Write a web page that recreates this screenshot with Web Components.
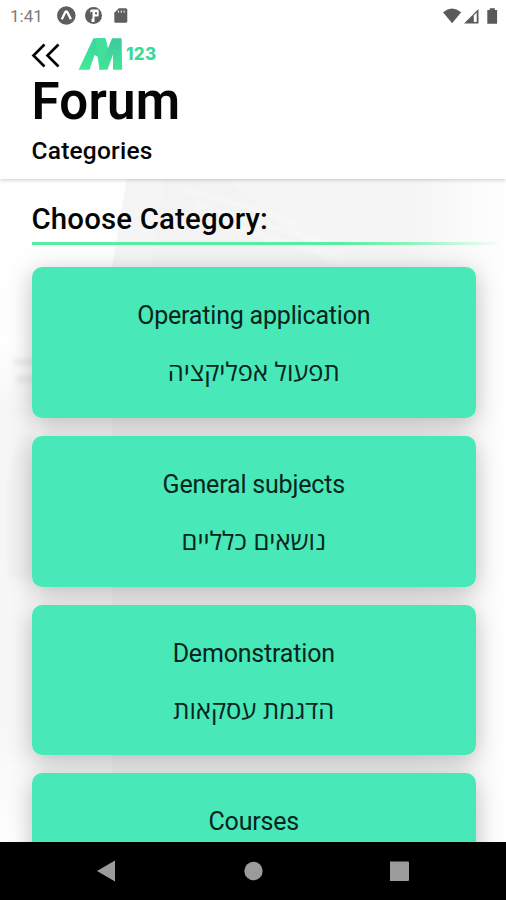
<!DOCTYPE html>
<html lang="en">
<head>
<meta charset="utf-8">
<title>Forum</title>
<style>
html,body{margin:0;height:100%;overflow:hidden;background:#fff}
body{font-family:Roboto,"Open Sans",sans-serif;color:#050505}
</style>
</head>
<body>
<forum-app></forum-app>
<script>
const define=(name,html)=>{
  const t=document.createElement('template');
  t.innerHTML=html;
  customElements.define(name,class extends HTMLElement{
    constructor(){super();this.attachShadow({mode:'open'}).append(t.content.cloneNode(true));}
  });
};

define('status-bar',`<style>
:host{display:flex;height:32px;box-sizing:border-box;padding:0 7px 0 10px;align-items:center;font-size:17px;color:#7c7c7c}
.time{width:47px;line-height:32px}
svg{display:block}
.right{margin-left:auto}
</style>
<span class="time">1:41</span>
<svg width="74" height="22" viewBox="57 5 74 22">
<circle cx="66.3" cy="15.5" r="9.3" fill="#5e5e5e"/>
<path d="M61.8 19.3 65.2 12.3q1.1-1.800 2.200 0l3.500 7" fill="none" stroke="#fff" stroke-width="2.300"/>
<circle cx="93.5" cy="15.5" r="8.500" fill="#5e5e5e"/>
<path d="M91 9.500h6.500q1.200 0 1.200 1.200v4.500q0 1.200-1.200 1.200H94.500v5.500H91.500v-8.500h-1q-1.500-2 .5-3.900z" fill="#fff"/><path d="M90.500 11.800h2v7h-2zM95 12.300h2v2h-2z" fill="#5e5e5e"/>
<path d="M118.800 8.200h6.900q1.600 0 1.600 1.600v11.400q0 1.600-1.600 1.600h-9.800q-1.600 0-1.600-1.600v-8.400z" fill="#5e5e5e"/>
<path d="M118.500 10.500v2.300M121.300 10.500v2.300M124.100 10.500v2.300" stroke="#ddd" stroke-width="1.200"/>
</svg>
<svg class="right" width="58" height="20" viewBox="441 5 58 20">
<path d="M443 11.200q9-7.400 18.200 0L452.100 22.300z" fill="#5a5a5a"/>
<path d="M464 22.500 478.500 8v14.500z" fill="#5a5a5a"/><path d="M473.800 14.500 476.700 11.500v9.600h-2.900z" fill="#fff"/>
<path d="M489.700 7.300h5.200v1.700h2.200v13.800h-9.800V9h2.400z" fill="#5a5a5a"/>
</svg>`);

define('brand-logo',`<style>
:host{display:flex;align-items:flex-start;color:#3bd99a}
svg{display:block}
span{font:800 17px/20px Inter,sans-serif;margin:7px 0 0 3px;letter-spacing:.3px}
</style>
<svg width="45" height="34" viewBox="78 37 45 34">
<defs><linearGradient id="g" x1="0" y1="1" x2="1" y2="0"><stop offset="0" stop-color="#43ed96"/><stop offset="1" stop-color="#37cfa0"/></linearGradient>
<linearGradient id="h" x1="0" y1="0" x2="0" y2="1"><stop offset="0" stop-color="#3cc99e"/><stop offset="1" stop-color="#42e696"/></linearGradient></defs>
<path d="M78.600 69.800 93.400 38.200H105l2 8L100 58l-5.500-3L89.500 69.800z" fill="url(#g)"/>
<path d="M95 38.200h10.500l3.500 14-7.500 17.600H99.500z" fill="#40df9c"/>
<path d="M99.500 69.800 112 38.200H121.600L122.100 69.800H113V54.500L107.500 69.800z" fill="url(#h)"/>
</svg><span>123</span>`);

define('page-header',`<style>
:host{display:block;position:relative;z-index:2;box-sizing:border-box;height:179px;background:#fff;box-shadow:0 1px 4px #0003}
.bar{display:flex;height:41px;padding:5px 0 0 31px;box-sizing:border-box}
.back{width:29px;height:26px;margin:5px 18px 0 0}
h1{margin:0;padding-left:31.500px;font-size:51px;line-height:58px;font-weight:600;letter-spacing:.25px;height:60px}
h2{margin:0;padding-left:31.500px;font-size:24.500px;line-height:30px;font-weight:500;padding-top:3px;letter-spacing:.22px}
</style>
<status-bar></status-bar>
<div class="bar">
<svg class="back" viewBox="31 42 29 26"><path d="M44.500 44.500 33.500 55.500 44.500 66.500M58.500 44.500 47.500 55.500 58.500 66.500" fill="none" stroke="#050505" stroke-width="2.700"/></svg>
<brand-logo></brand-logo></div>
<h1><slot name="title"></slot></h1>
<h2><slot name="subtitle"></slot></h2>`);

define('section-title',`<style>
:host{display:block;height:66px;box-sizing:border-box;padding:22px 0 0 31.500px;font-size:29.400px;line-height:36px;font-weight:500;letter-spacing:.17px;margin-bottom:22px}
i{display:block;height:3px;margin-top:5px;background:linear-gradient(90deg,#56eda4 65%,#8df4bd 80%,#fff0 99%)}
</style><slot></slot><i></i>`);

define('category-card',`<style>
:host{display:block;position:relative;box-sizing:border-box;height:150.800px;flex:none;border-radius:10px;background:#49e8b8;padding-top:33px;text-align:center;font-size:25px;line-height:32px;color:#08251d}
:host::before{content:"";position:absolute;inset:0;z-index:-1;border-radius:10px;box-shadow:0 6px 24px #00000040}
.en{letter-spacing:-.19px}
.he{margin-top:23px;font-family:"Open Sans",sans-serif;font-size:25.500px}
</style><div class="en"><slot></slot></div><div class="he" dir="rtl"><slot name="he"></slot></div>`);

define('nav-bar',`<style>
:host{display:flex;height:58.500px;background:#000;position:relative;z-index:3;flex:none;justify-content:space-between;align-items:center;padding:0 96px;box-sizing:border-box}
svg{width:20px;height:22px;fill:#9b9b9b}
</style>
<svg viewBox="0 0 20 22"><path d="M1 11 19 .500v21z"/></svg>
<svg viewBox="0 0 20 22"><circle cx="10.500" cy="11" r="9.200"/></svg>
<svg viewBox="0 0 20 22"><rect x="-.500" y="1.500" width="19.500" height="19.500" rx="1"/></svg>`);

define('forum-app',`<style>
:host{display:flex;flex-direction:column;height:900px;width:506px;overflow:hidden}
main{flex:1;min-height:0;overflow:hidden;position:relative;background:#fafafa}
.bg{position:absolute;inset:0;width:506px;height:662px}
.body{position:relative;isolation:isolate}
.list{display:flex;flex-direction:column;gap:18px;padding:0 30.200px 0 31.700px}
</style>
<page-header><span slot="title">Forum</span><span slot="subtitle">Categories</span></page-header>
<main>
<svg class="bg" viewBox="0 180 506 662"><defs>
<linearGradient id="f" x2="1"><stop offset=".2" stop-color="#f5f5f5"/><stop offset=".75" stop-color="#f5f5f5"/><stop offset="1" stop-color="#fefefe"/></linearGradient>
<linearGradient id="v" x2="0" y2="1"><stop stop-color="#fff"/><stop offset=".15" stop-color="#f6f6f6"/><stop offset=".8" stop-color="#f8f8f8"/><stop offset="1" stop-color="#fff"/></linearGradient>
<filter id="b"><feGaussianBlur stdDeviation="2"/></filter></defs>
<path d="M0 178h127l-15 172H0z" fill="#fefefe"/><path d="M127 178h379v664H112V267z" fill="url(#f)"/>
<path d="M165 178h60l110 92H150z" fill="#f1f1f1" opacity=".6"/>
<g filter="url(#b)"><path d="M185 190 300 225M195 205 330 245M205 220 350 262" stroke="#f9f9f9" stroke-width="3"/>
<path d="M-6 340h40v510H-6z" fill="url(#v)"/><path d="M14 360h20v6H14zM16 377h18v7H16z" fill="#ededed"/><path d="M6 510Q8 470 20 435h14v145H8z" fill="#f2f2f2"/></g>
</svg>
<div class="body"><section-title>Choose Category:</section-title>
<div class="list">
<category-card>Operating application<span slot="he">תפעול אפליקציה</span></category-card>
<category-card>General subjects<span slot="he">נושאים כלליים</span></category-card>
<category-card>Demonstration<span slot="he">הדגמת עסקאות</span></category-card>
<category-card>Courses</category-card>
</div></div>
</main>
<nav-bar></nav-bar>`);
</script>
</body>
</html>
